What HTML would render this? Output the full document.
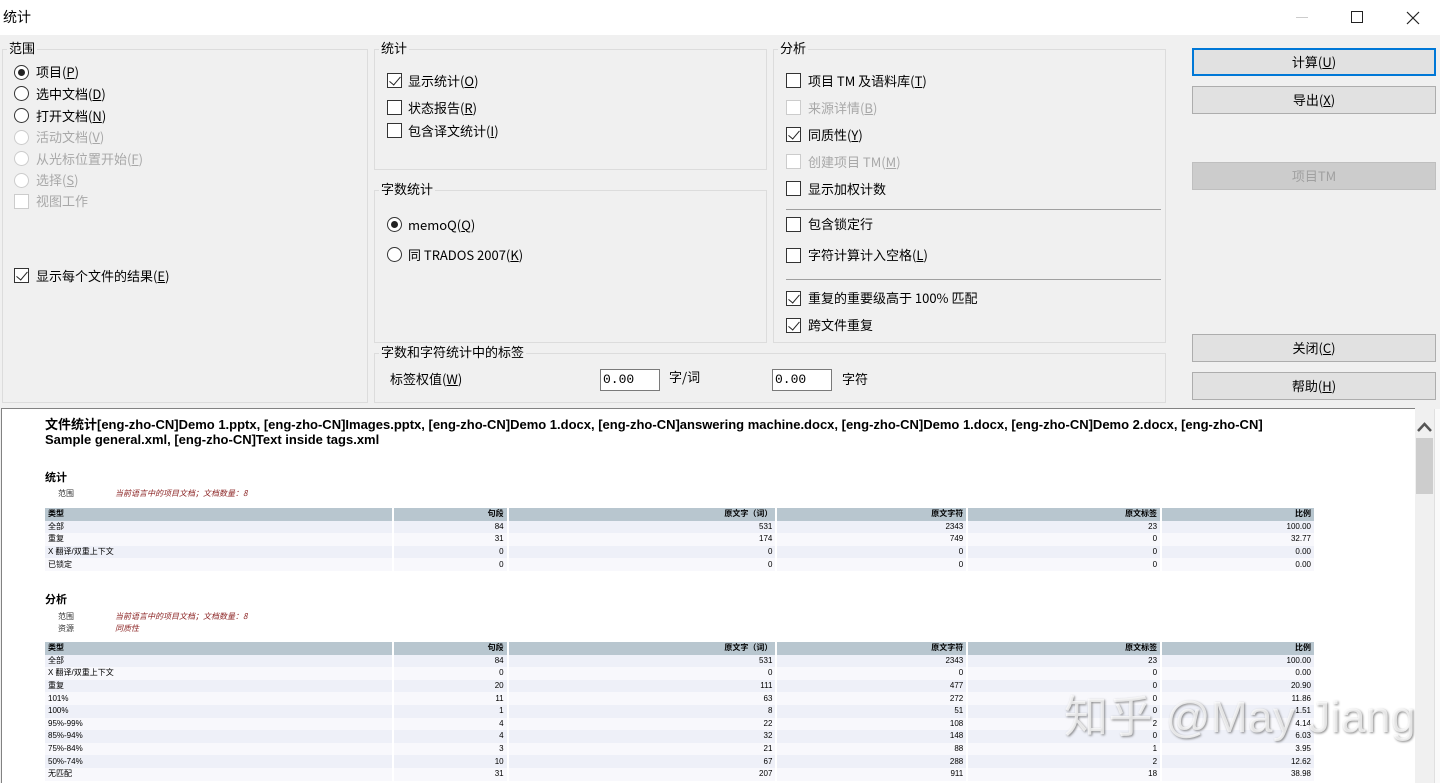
<!DOCTYPE html>
<html><head><meta charset="utf-8">
<style>
*{margin:0;padding:0;box-sizing:border-box}
body{width:1440px;height:783px;overflow:hidden;background:#f0f0f0;font-family:"Liberation Sans","Noto Sans CJK SC",sans-serif;font-size:13px;color:#000;position:relative}
.a{position:absolute;white-space:nowrap}
.grp{position:absolute;border:1px solid #dcdcdc}
.lbl{position:absolute;background:#f0f0f0;padding:0 2px;font-size:13px;line-height:16px;font-family:"Noto Sans CJK SC",sans-serif}
.cb{position:absolute;width:15px;height:15px;border:1px solid #333;background:#fff}
.cb.dis{border-color:#ccc}
.cb.on::after{content:"";position:absolute;left:4px;top:0px;width:5px;height:10px;border:solid #222;border-width:0 1.5px 1.5px 0;transform:rotate(40deg)}
.rb{position:absolute;width:15px;height:15px;border:1px solid #333;border-radius:50%;background:#fff}
.rb.dis{border-color:#ccc}
.rb.on::after{content:"";position:absolute;left:3px;top:3px;width:7px;height:7px;border-radius:50%;background:#222}
.t{position:absolute;font-family:"Noto Sans CJK SC",sans-serif;font-size:13px;line-height:16px;white-space:nowrap}
.g{color:#a8a8a8}
.btn{position:absolute;left:1192px;width:244px;height:28px;background:#e1e1e1;border:1px solid #adadad;text-align:center;line-height:26px;font-family:"Noto Sans CJK SC",sans-serif;font-size:13px}
u{text-decoration:underline}
.inp{position:absolute;width:60px;height:22px;background:#fff;border:1px solid #7a7a7a;font-family:"Liberation Mono",monospace;font-size:13px;line-height:20px;padding-left:2px}
.rep{position:absolute;left:1px;top:408px;width:1414px;height:375px;background:#fff;border-top:1px solid #828282;border-left:1px solid #828282}
table{position:absolute;left:45px;border-collapse:collapse;font-size:8px;font-family:"Liberation Sans","Noto Sans CJK SC",sans-serif;width:1271px}
td{height:12.6px;line-height:12px;padding:0 3px;text-align:right;border-right:2px solid #fff}
td:first-child{text-align:left}
tr.h td{background:#b8c6cf;font-weight:bold}
tr:nth-child(even) td{background:#eef0f8}
tr:nth-child(odd):not(.h) td{background:#f8f8fc}
</style></head><body>
<div class="a" style="left:0;top:0;width:1440px;height:35px;background:#fff"></div>
<div class="t" style="left:3px;top:9px;font-size:14px">统计</div>
<div class="a" style="left:1296px;top:17px;width:12px;height:1px;background:#ccc"></div>
<div class="a" style="left:1351px;top:11px;width:12px;height:12px;border:1px solid #222"></div>
<svg class="a" style="left:1406px;top:11px" width="14" height="14"><path d="M1 1L13 13M13 1L1 13" stroke="#222" stroke-width="1.2"/></svg>

<!-- 范围 -->
<div class="grp" style="left:2px;top:49px;width:366px;height:354px"></div>
<div class="lbl" style="left:7px;top:40px">范围</div>
<div class="rb on" style="left:14px;top:65px"></div><div class="t" style="left:36px;top:64px">项目(<u>P</u>)</div>
<div class="rb" style="left:14px;top:86px"></div><div class="t" style="left:36px;top:86px">选中文档(<u>D</u>)</div>
<div class="rb" style="left:14px;top:108px"></div><div class="t" style="left:36px;top:108px">打开文档(<u>N</u>)</div>
<div class="rb dis" style="left:14px;top:130px"></div><div class="t g" style="left:36px;top:129px">活动文档(<u>V</u>)</div>
<div class="rb dis" style="left:14px;top:151px"></div><div class="t g" style="left:36px;top:151px">从光标位置开始(<u>F</u>)</div>
<div class="rb dis" style="left:14px;top:173px"></div><div class="t g" style="left:36px;top:172px">选择(<u>S</u>)</div>
<div class="cb dis" style="left:14px;top:194px"></div><div class="t g" style="left:36px;top:193px">视图工作</div>
<div class="cb on" style="left:14px;top:268px"></div><div class="t" style="left:36px;top:268px">显示每个文件的结果(<u>E</u>)</div>

<!-- 统计 -->
<div class="grp" style="left:374px;top:49px;width:393px;height:121px"></div>
<div class="lbl" style="left:379px;top:40px">统计</div>
<div class="cb on" style="left:387px;top:73px"></div><div class="t" style="left:408px;top:73px">显示统计(<u>O</u>)</div>
<div class="cb" style="left:387px;top:100px"></div><div class="t" style="left:408px;top:100px">状态报告(<u>R</u>)</div>
<div class="cb" style="left:387px;top:123px"></div><div class="t" style="left:408px;top:123px">包含译文统计(<u>I</u>)</div>

<!-- 字数统计 -->
<div class="grp" style="left:374px;top:190px;width:393px;height:153px"></div>
<div class="lbl" style="left:379px;top:181px">字数统计</div>
<div class="rb on" style="left:387px;top:217px"></div><div class="t" style="left:408px;top:217px">memoQ(<u>Q</u>)</div>
<div class="rb" style="left:387px;top:247px"></div><div class="t" style="left:408px;top:247px">同 TRADOS 2007(<u>K</u>)</div>

<!-- 标签 -->
<div class="grp" style="left:374px;top:353px;width:792px;height:50px"></div>
<div class="lbl" style="left:379px;top:344px">字数和字符统计中的标签</div>
<div class="t" style="left:390px;top:371px">标签权值(<u>W</u>)</div>
<div class="inp" style="left:600px;top:369px">0.00</div>
<div class="t" style="left:669px;top:369px">字/词</div>
<div class="inp" style="left:772px;top:369px">0.00</div>
<div class="t" style="left:842px;top:371px">字符</div>

<!-- 分析 -->
<div class="grp" style="left:773px;top:49px;width:393px;height:294px"></div>
<div class="lbl" style="left:778px;top:40px">分析</div>
<div class="cb" style="left:786px;top:73px"></div><div class="t" style="left:808px;top:73px">项目 TM 及语料库(<u>T</u>)</div>
<div class="cb dis" style="left:786px;top:100px"></div><div class="t g" style="left:808px;top:100px">来源详情(<u>B</u>)</div>
<div class="cb on" style="left:786px;top:127px"></div><div class="t" style="left:808px;top:127px">同质性(<u>Y</u>)</div>
<div class="cb dis" style="left:786px;top:154px"></div><div class="t g" style="left:808px;top:154px">创建项目 TM(<u>M</u>)</div>
<div class="cb" style="left:786px;top:181px"></div><div class="t" style="left:808px;top:181px">显示加权计数</div>
<div class="a" style="left:786px;top:209px;width:375px;height:1px;background:#a0a0a0"></div>
<div class="cb" style="left:786px;top:217px"></div><div class="t" style="left:808px;top:216px">包含锁定行</div>
<div class="cb" style="left:786px;top:248px"></div><div class="t" style="left:808px;top:247px">字符计算计入空格(<u>L</u>)</div>
<div class="a" style="left:786px;top:279px;width:375px;height:1px;background:#a0a0a0"></div>
<div class="cb on" style="left:786px;top:291px"></div><div class="t" style="left:808px;top:290px">重复的重要级高于 100% 匹配</div>
<div class="cb on" style="left:786px;top:318px"></div><div class="t" style="left:808px;top:317px">跨文件重复</div>

<!-- buttons -->
<div class="btn" style="top:48px;border:2px solid #0078d7;line-height:24px">计算(<u>U</u>)</div>
<div class="btn" style="top:86px">导出(<u>X</u>)</div>
<div class="btn" style="top:162px;background:#cccccc;border-color:#bfbfbf;color:#a0a0a0">项目TM</div>
<div class="btn" style="top:334px">关闭(<u>C</u>)</div>
<div class="btn" style="top:372px">帮助(<u>H</u>)</div>

<!-- report -->
<div class="rep"></div>
<div class="a" style="left:45px;top:417px;font-size:13px;font-weight:bold;line-height:15px">文件统计[eng-zho-CN]Demo 1.pptx, [eng-zho-CN]Images.pptx, [eng-zho-CN]Demo 1.docx, [eng-zho-CN]answering machine.docx, [eng-zho-CN]Demo 1.docx, [eng-zho-CN]Demo 2.docx, [eng-zho-CN]<br>Sample general.xml, [eng-zho-CN]Text inside tags.xml</div>
<div class="a" style="left:45px;top:469px;font-size:11px;font-weight:bold;font-family:'Noto Sans CJK SC',sans-serif">统计</div>
<div class="a" style="left:58px;top:488px;font-size:8px;color:#333;font-family:'Noto Sans CJK SC',sans-serif">范围</div>
<div class="a" style="left:115px;top:488px;font-size:8px;color:#8b2323;font-style:italic;font-family:'Noto Sans CJK SC',sans-serif">当前语言中的项目文档；文档数量：8</div>
<table style="top:508px">
<colgroup><col style="width:348px"><col style="width:115px"><col style="width:269px"><col style="width:191px"><col style="width:194px"><col style="width:154px"></colgroup>
<tr class="h"><td>类型</td><td>句段</td><td>原文字（词）</td><td>原文字符</td><td>原文标签</td><td>比例</td></tr>
<tr><td>全部</td><td>84</td><td>531</td><td>2343</td><td>23</td><td>100.00</td></tr>
<tr><td>重复</td><td>31</td><td>174</td><td>749</td><td>0</td><td>32.77</td></tr>
<tr><td>X 翻译/双重上下文</td><td>0</td><td>0</td><td>0</td><td>0</td><td>0.00</td></tr>
<tr><td>已锁定</td><td>0</td><td>0</td><td>0</td><td>0</td><td>0.00</td></tr>
</table>
<div class="a" style="left:45px;top:591px;font-size:11px;font-weight:bold;font-family:'Noto Sans CJK SC',sans-serif">分析</div>
<div class="a" style="left:58px;top:611px;font-size:8px;color:#333;font-family:'Noto Sans CJK SC',sans-serif">范围</div>
<div class="a" style="left:115px;top:611px;font-size:8px;color:#8b2323;font-style:italic;font-family:'Noto Sans CJK SC',sans-serif">当前语言中的项目文档；文档数量：8</div>
<div class="a" style="left:58px;top:623px;font-size:8px;color:#333;font-family:'Noto Sans CJK SC',sans-serif">资源</div>
<div class="a" style="left:115px;top:623px;font-size:8px;color:#8b2323;font-style:italic;font-family:'Noto Sans CJK SC',sans-serif">同质性</div>
<table style="top:642px">
<colgroup><col style="width:348px"><col style="width:115px"><col style="width:269px"><col style="width:191px"><col style="width:194px"><col style="width:154px"></colgroup>
<tr class="h"><td>类型</td><td>句段</td><td>原文字（词）</td><td>原文字符</td><td>原文标签</td><td>比例</td></tr>
<tr><td>全部</td><td>84</td><td>531</td><td>2343</td><td>23</td><td>100.00</td></tr>
<tr><td>X 翻译/双重上下文</td><td>0</td><td>0</td><td>0</td><td>0</td><td>0.00</td></tr>
<tr><td>重复</td><td>20</td><td>111</td><td>477</td><td>0</td><td>20.90</td></tr>
<tr><td>101%</td><td>11</td><td>63</td><td>272</td><td>0</td><td>11.86</td></tr>
<tr><td>100%</td><td>1</td><td>8</td><td>51</td><td>0</td><td>1.51</td></tr>
<tr><td>95%-99%</td><td>4</td><td>22</td><td>108</td><td>2</td><td>4.14</td></tr>
<tr><td>85%-94%</td><td>4</td><td>32</td><td>148</td><td>0</td><td>6.03</td></tr>
<tr><td>75%-84%</td><td>3</td><td>21</td><td>88</td><td>1</td><td>3.95</td></tr>
<tr><td>50%-74%</td><td>10</td><td>67</td><td>288</td><td>2</td><td>12.62</td></tr>
<tr><td>无匹配</td><td>31</td><td>207</td><td>911</td><td>18</td><td>38.98</td></tr>
</table>
<div class="a" style="left:1064px;top:692px;font-size:44px;color:rgba(255,255,255,0.75);text-shadow:1px 1px 2px rgba(90,90,90,0.7);font-family:'Liberation Sans','Noto Sans CJK SC',sans-serif;line-height:52px;letter-spacing:0.5px">知乎 @May Jiang</div>

<!-- scrollbar -->
<div class="a" style="left:1415px;top:409px;width:19px;height:374px;background:#f0f0f0"></div>
<div class="a" style="left:1434px;top:409px;width:6px;height:374px;background:#fafafa;border-left:1px solid #e0e0e0"></div>
<svg class="a" style="left:1416px;top:420px" width="17" height="14"><path d="M2 11 L8.5 4 L15 11" fill="none" stroke="#555" stroke-width="2.5"/></svg>
<div class="a" style="left:1416px;top:438px;width:17px;height:56px;background:#cdcdcd"></div>
</body></html>
